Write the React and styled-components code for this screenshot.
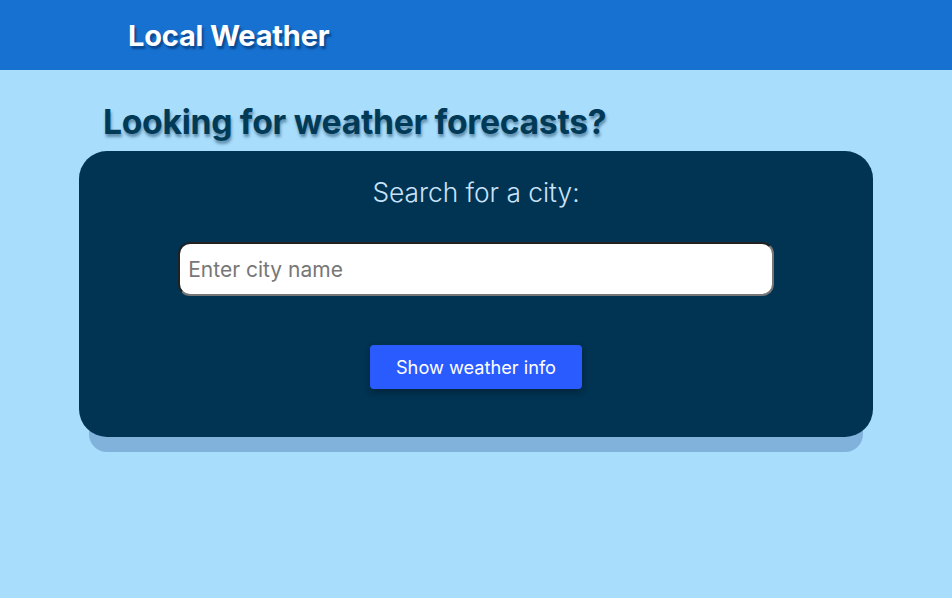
import React from "react";
import styled, { createGlobalStyle } from "styled-components";

const Global = createGlobalStyle`
  html, body { margin: 0; padding: 0; }
  body {
    background: #a9ddfc;
    font-family: Inter, "Noto Sans", sans-serif;
    min-height: 598px;
  }
`;

const Header = styled.header`
  height: 70px;
  background: #1671d0;
  display: flex;
  align-items: center;
  padding-left: 128px;
`;

const Brand = styled.h1`
  margin: 0;
  font-size: 29px;
  font-weight: 700;
  color: #ffffff;
  text-shadow: 2px 3px 2px rgba(0, 40, 90, 0.55);
  letter-spacing: -0.2px;
`;

const Main = styled.main`
  padding: 0 79px;
  display: flex;
  flex-direction: column;
`;

const Heading = styled.h2`
  margin: 30px 0 7px 24px;
  font-size: 33.7px;
  font-weight: 700;
  color: #003a57;
  text-shadow: 1px 3px 3px rgba(0, 40, 70, 0.45);
  letter-spacing: -0.3px;
  line-height: 44px;
`;

const Card = styled.section`
  background: #013352;
  border-radius: 28px;
  box-shadow: 0 25px 0 -10px #80b2dc;
  display: flex;
  flex-direction: column;
  align-items: center;
  padding: 26px 0 48px;
`;

const Prompt = styled.p`
  margin: 0;
  font-size: 26.3px;
  font-weight: 300;
  color: #c9e3fb;
  line-height: 32px;
`;

const CityInput = styled.input`
  margin-top: 33px;
  width: 75%;
  box-sizing: border-box;
  height: 54px;
  border-radius: 12px;
  border: 2px inset #767676;
  background: #fff;
  padding: 0 8px;
  font-family: Inter, "Noto Sans", sans-serif;
  font-size: 21px;
  color: #222;
  &::placeholder { color: #777; }
`;

const Button = styled.button`
  margin-top: 49px;
  width: 212px;
  height: 44px;
  border: none;
  border-radius: 4px;
  background: #2a5bff;
  color: #fff;
  font-family: Inter, "Noto Sans", sans-serif;
  font-size: 18.2px;
  box-shadow: 0 3px 6px rgba(0, 0, 0, 0.3);
  cursor: pointer;
`;

export default function App() {
  return (
    <>
      <Global />
      <Header>
        <Brand>Local Weather</Brand>
      </Header>
      <Main>
        <Heading>Looking for weather forecasts?</Heading>
        <Card>
          <Prompt>Search for a city:</Prompt>
          <CityInput placeholder="Enter city name" />
          <Button>Show weather info</Button>
        </Card>
      </Main>
    </>
  );
}
